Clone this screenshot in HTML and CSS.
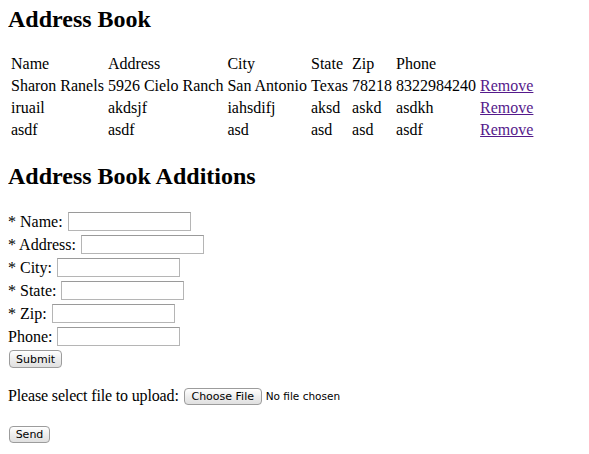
FILE: index.html
```html
<!DOCTYPE html>
<html>
<head>
<meta charset="utf-8">
<title>Address Book</title>
<link rel="stylesheet" href="styles.css">
</head>
<body>
<h1 class="title">Address Book</h1>
<table class="book">
  <tr><td>Name</td><td>Address</td><td>City</td><td>State</td><td>Zip</td><td>Phone</td><td></td></tr>
  <tr><td>Sharon Ranels</td><td>5926 Cielo Ranch</td><td>San Antonio</td><td>Texas</td><td>78218</td><td>8322984240</td><td><a class="remove" href="#">Remove</a></td></tr>
  <tr><td>iruail</td><td>akdsjf</td><td>iahsdifj</td><td>aksd</td><td>askd</td><td>asdkh</td><td><a class="remove" href="#">Remove</a></td></tr>
  <tr><td>asdf</td><td>asdf</td><td>asd</td><td>asd</td><td>asd</td><td>asdf</td><td><a class="remove" href="#">Remove</a></td></tr>
</table>
<h2 class="title sub">Address Book Additions</h2>
<form class="add">
  <div class="row"><label>* Name:</label><input class="field" type="text"></div>
  <div class="row"><label>* Address:</label><input class="field" type="text"></div>
  <div class="row"><label>* City:</label><input class="field" type="text"></div>
  <div class="row"><label>* State:</label><input class="field" type="text"></div>
  <div class="row"><label>* Zip:</label><input class="field" type="text"></div>
  <div class="row"><label>Phone:</label><input class="field" type="text"></div>
  <button class="btn submit" type="button">Submit</button>
</form>
<div class="upload">
  <span class="upload-label">Please select file to upload:</span>
  <button class="btn choose" type="button">Choose File</button>
  <span class="nofile">No file chosen</span>
</div>
<div class="send-row"><button class="btn send" type="button">Send</button></div>
</body>
</html>
```
FILE: styles.css
```css
html, body {
  background: #fff;
}
body {
  margin: 5px 8px 8px 8px;
  font-family: "Liberation Serif", "Times New Roman", serif;
  font-size: 16px;
  color: #000;
}
.title {
  font-size: 24px;
  font-weight: bold;
  margin: 0 0 19px 0;
  line-height: 28px;
}
.sub {
  margin: 20px 0 20px 0;
}
.book {
  border-spacing: 2px;
  margin-left: 0;
}
.book td {
  padding: 1px;
  line-height: 18px;
  white-space: nowrap;
}
.remove {
  color: #551a8b;
  text-decoration: underline;
}
.add {
  margin: 0;
}
.row {
  display: flex;
  align-items: center;
  gap: 5px;
  height: 23px;
}
.row label {
  line-height: 18px;
}
.field {
  box-sizing: border-box;
  width: 123px;
  height: 19px;
  margin: 0;
  border: 1px solid #b5b5b5;
  border-top-color: #9a9a9a;
  background: #fff;
  padding: 0 2px;
}
.btn {
  box-sizing: border-box;
  height: 17px;
  padding: 0;
  margin: 0;
  border: 1px solid #9c9c9c;
  border-radius: 4px;
  background: linear-gradient(#ffffff, #ececec 55%, #e0e0e0);
  font-family: "DejaVu Sans", "Liberation Sans", sans-serif;
  font-size: 11px;
  color: #000;
  line-height: 15px;
  text-align: center;
}
.submit {
  display: block;
  width: 53px;
  height: 18px;
  margin: 2px 0 0 1px;
}
.upload {
  display: flex;
  align-items: center;
  margin-top: 19px;
  height: 18px;
}
.upload-label {
  margin-right: 5px;
  letter-spacing: -0.15px;
}
.choose {
  width: 78px;
}
.nofile {
  margin-left: 4px;
  font-family: "DejaVu Sans", "Liberation Sans", sans-serif;
  font-size: 10.5px;
}
.send-row {
  margin-top: 21px;
}
.send {
  display: block;
  width: 41px;
  margin-left: 1px;
}
```
